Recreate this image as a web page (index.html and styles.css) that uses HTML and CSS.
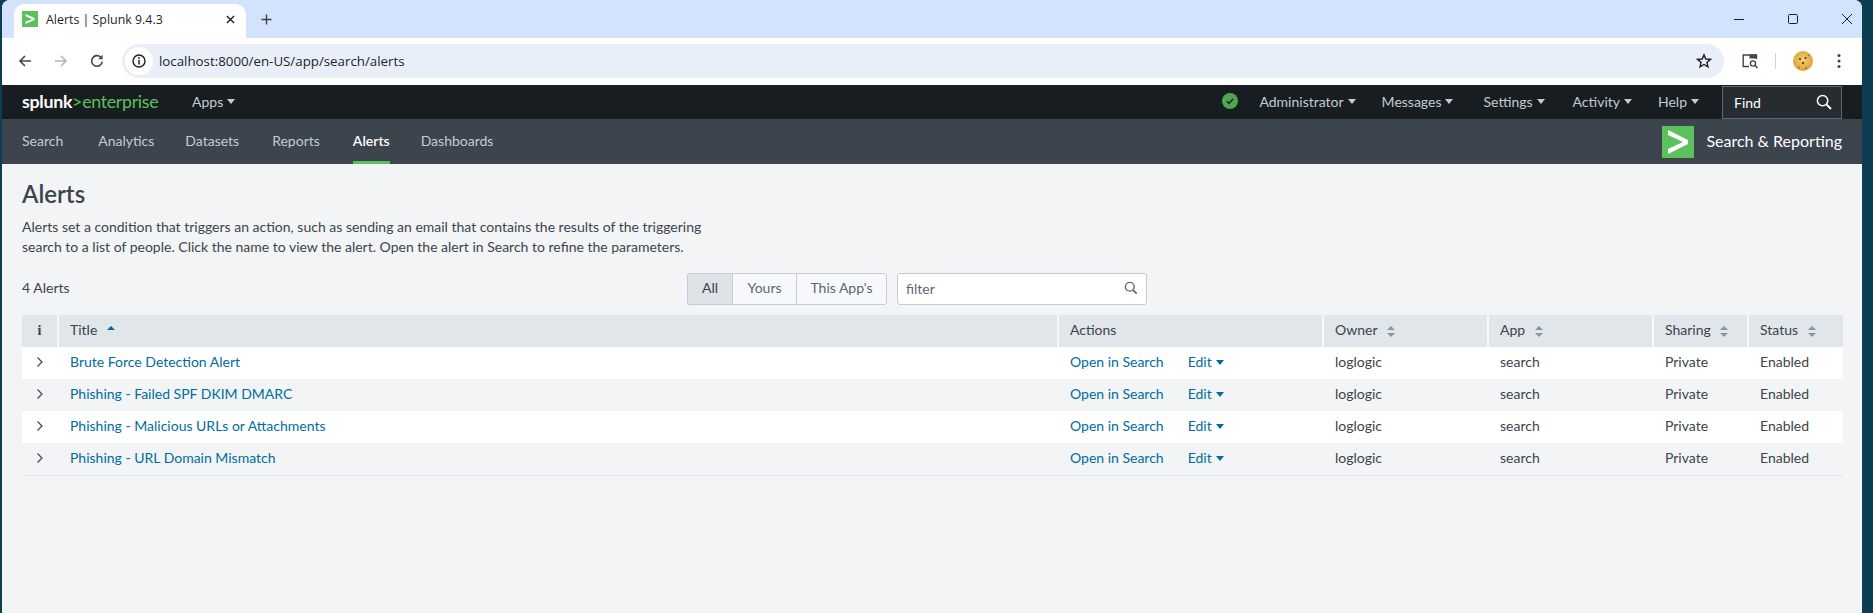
FILE: index.html
```html
<!DOCTYPE html>
<html lang="en">
<head>
<meta charset="utf-8">
<title>Alerts | Splunk 9.4.3</title>
<link rel="stylesheet" href="styles.css">
</head>
<body>
<div class="window">
  <div class="tabstrip">
    <div class="tab">
      <svg class="favicon" viewBox="0 0 16 16"><rect width="16" height="16" fill="#5cc05c"/><path d="M3.5 3 L12.5 7 V9 L3.5 13 V10.8 L10 8 L3.5 5.2Z" fill="#fff"/></svg>
      <span class="tab-title">Alerts | Splunk 9.4.3</span>
      <svg class="tab-close" viewBox="0 0 10 10"><path d="M1 1 L9 9 M9 1 L1 9" stroke="#1f1f1f" stroke-width="1.5" fill="none"/></svg>
    </div>
    <svg class="newtab" viewBox="0 0 12 12"><path d="M6 0.5 V11.5 M0.5 6 H11.5" stroke="#3c4043" stroke-width="1.5" fill="none"/></svg>
    <div class="winctrls">
      <svg class="winbtn" viewBox="0 0 12 12"><path d="M1 6.5 H11" stroke="#1f1f1f" stroke-width="1"/></svg>
      <svg class="winbtn" viewBox="0 0 12 12"><rect x="1.5" y="1.5" width="9" height="9" rx="1" fill="none" stroke="#1f1f1f" stroke-width="1"/></svg>
      <svg class="winbtn" viewBox="0 0 12 12"><path d="M1 1 L11 11 M11 1 L1 11" stroke="#1f1f1f" stroke-width="1" fill="none"/></svg>
    </div>
  </div>
  <div class="toolbar">
    <svg class="tool first" viewBox="0 0 16 16"><path d="M14 8 H3 M8 3 L3 8 L8 13" stroke="#474747" stroke-width="1.6" fill="none"/></svg>
    <svg class="tool" viewBox="0 0 16 16"><path d="M2 8 H13 M8 3 L13 8 L8 13" stroke="#b4b6b8" stroke-width="1.6" fill="none"/></svg>
    <svg class="tool" viewBox="0 0 16 16"><path d="M13.2 8.6 A5.3 5.3 0 1 1 11.7 4.2" stroke="#474747" stroke-width="1.6" fill="none"/><path d="M13.6 1.8 V6.2 H9.2Z" fill="#474747"/></svg>
    <div class="omnibox">
      <span class="info-wrap"><svg class="info" viewBox="0 0 14 14"><circle cx="7" cy="7" r="6" fill="none" stroke="#1f1f1f" stroke-width="1.4"/><path d="M7 6 V10.4" stroke="#1f1f1f" stroke-width="1.5"/><circle cx="7" cy="4" r=".9" fill="#1f1f1f"/></svg></span>
      <span class="url">localhost:8000/en-US/app/search/alerts</span>
      <svg class="star" viewBox="0 0 16 16"><path d="M8 1.8 L9.8 6 L14.4 6.4 L10.9 9.4 L12 13.9 L8 11.5 L4 13.9 L5.1 9.4 L1.6 6.4 L6.2 6Z" fill="none" stroke="#1f1f1f" stroke-width="1.4"/></svg>
    </div>
    <svg class="panel" viewBox="0 0 18 18"><path d="M8 14.5 H2.2 V3 H15.5 V7" fill="none" stroke="#444" stroke-width="1.4"/><rect x="8.5" y="2.5" width="7.5" height="4" fill="#444"/><circle cx="12" cy="11.5" r="2.6" fill="none" stroke="#444" stroke-width="1.4"/><path d="M14 13.5 L16.5 16" stroke="#444" stroke-width="1.5"/></svg>
    <span class="sep"></span>
    <svg class="avatar" viewBox="0 0 20 20"><defs><radialGradient id="av" cx=".5" cy=".45" r=".6"><stop offset="0" stop-color="#f3d46a"/><stop offset="1" stop-color="#d99b35"/></radialGradient></defs><circle cx="10" cy="10" r="10" fill="url(#av)"/><circle cx="7" cy="8" r="1.1" fill="#333"/><circle cx="12.5" cy="7" r="1" fill="#333"/><circle cx="10" cy="12" r="1.2" fill="#6b4a1c"/><circle cx="15.5" cy="4.5" r="1" fill="#d8553c"/><circle cx="6" cy="16.5" r="1" fill="#d8553c"/><circle cx="13" cy="17" r="1" fill="#d8553c"/></svg>
    <svg class="dots" viewBox="0 0 4 16"><circle cx="2" cy="2.5" r="1.5" fill="#444"/><circle cx="2" cy="8" r="1.5" fill="#444"/><circle cx="2" cy="13.5" r="1.5" fill="#444"/></svg>
  </div>

  <header class="topnav">
    <a class="brand"><b>splunk</b><span class="gt">&gt;</span><span class="ent">enterprise</span></a>
    <a class="navitem apps">Apps<i class="caret"></i></a>
    <span class="spacer"></span>
    <svg class="status-ok" viewBox="0 0 16 16"><circle cx="8" cy="8" r="8" fill="#4fa64f"/><path d="M4.8 8.3 L7 10.4 L11.2 5.8" stroke="#10261a" stroke-width="1.4" fill="none"/></svg>
    <a class="navitem admin">Administrator<i class="caret"></i></a>
    <a class="navitem messages">Messages<i class="caret"></i></a>
    <a class="navitem">Settings<i class="caret"></i></a>
    <a class="navitem activity">Activity<i class="caret"></i></a>
    <a class="navitem help">Help<i class="caret"></i></a>
    <div class="find"><span>Find</span><svg class="find-icon" viewBox="0 0 16 16"><circle cx="6.6" cy="6.6" r="5.2" fill="none" stroke="#fff" stroke-width="1.5"/><path d="M10.4 10.4 L15 15" stroke="#fff" stroke-width="2"/></svg></div>
  </header>

  <nav class="appbar">
    <a class="first">Search</a><a class="second">Analytics</a><a>Datasets</a><a>Reports</a><a class="active">Alerts</a><a>Dashboards</a>
    <span class="spacer"></span>
    <svg class="applogo" viewBox="0 0 32 32"><rect width="32" height="32" fill="#5cc05c"/><path d="M6 4 L26 14 V18 L6 28 V23 L21 16 L6 9Z" fill="#fff"/></svg>
    <span class="appname">Search &amp; Reporting</span>
  </nav>

  <main class="content">
    <h1>Alerts</h1>
    <p class="desc">Alerts set a condition that triggers an action, such as sending an email that contains the results of the triggering<br>search to a list of people. Click the name to view the alert. Open the alert in Search to refine the parameters.</p>
    <div class="controls">
      <span class="count">4 Alerts</span>
      <div class="btngroup"><button class="sel">All</button><button>Yours</button><button>This App's</button></div>
      <div class="filter"><span>filter</span><svg class="filter-icon" viewBox="0 0 16 16"><circle cx="6.6" cy="6.6" r="5" fill="none" stroke="#5c6773" stroke-width="1.6"/><path d="M10.3 10.3 L14.5 14.5" stroke="#5c6773" stroke-width="2"/></svg></div>
    </div>
    <table class="alerts">
      <colgroup><col class="c-i"><col class="c-title"><col class="c-actions"><col class="c-owner"><col class="c-app"><col class="c-sharing"><col class="c-status"></colgroup>
      <thead><tr>
        <th class="i">i</th>
        <th>Title <i class="sort-up"></i></th>
        <th>Actions</th>
        <th>Owner <i class="sort"></i></th>
        <th>App <i class="sort"></i></th>
        <th>Sharing <i class="sort"></i></th>
        <th>Status <i class="sort"></i></th>
      </tr></thead>
      <tbody>
        <tr><td class="exp"><svg class="chev" viewBox="0 0 8 12"><path d="M1.5 1.5 L6 6 L1.5 10.5" fill="none" stroke="#3c444d" stroke-width="1.2"/></svg></td><td><a>Brute Force Detection Alert</a></td><td><a class="open">Open in Search</a><a>Edit<i class="edit-caret"></i></a></td><td>loglogic</td><td>search</td><td>Private</td><td>Enabled</td></tr>
        <tr><td class="exp"><svg class="chev" viewBox="0 0 8 12"><path d="M1.5 1.5 L6 6 L1.5 10.5" fill="none" stroke="#3c444d" stroke-width="1.2"/></svg></td><td><a>Phishing - Failed SPF DKIM DMARC</a></td><td><a class="open">Open in Search</a><a>Edit<i class="edit-caret"></i></a></td><td>loglogic</td><td>search</td><td>Private</td><td>Enabled</td></tr>
        <tr><td class="exp"><svg class="chev" viewBox="0 0 8 12"><path d="M1.5 1.5 L6 6 L1.5 10.5" fill="none" stroke="#3c444d" stroke-width="1.2"/></svg></td><td><a>Phishing - Malicious URLs or Attachments</a></td><td><a class="open">Open in Search</a><a>Edit<i class="edit-caret"></i></a></td><td>loglogic</td><td>search</td><td>Private</td><td>Enabled</td></tr>
        <tr><td class="exp"><svg class="chev" viewBox="0 0 8 12"><path d="M1.5 1.5 L6 6 L1.5 10.5" fill="none" stroke="#3c444d" stroke-width="1.2"/></svg></td><td><a>Phishing - URL Domain Mismatch</a></td><td><a class="open">Open in Search</a><a>Edit<i class="edit-caret"></i></a></td><td>loglogic</td><td>search</td><td>Private</td><td>Enabled</td></tr>
      </tbody>
    </table>
  </main>
</div>
</body>
</html>
```
FILE: styles.css
```css
* { box-sizing: border-box; }
html, body { margin: 0; height: 613px; overflow: hidden; }
body { background: #0c3d52; font-family: Lato, "Open Sans", sans-serif; }
.window { width: 1860px; height: 613px; margin-left: 2px; display: flex; flex-direction: column; background: #f2f4f5; border-top-right-radius: 8px; border-top-left-radius: 8px; overflow: hidden; }
.spacer { flex: 1; }

/* browser chrome */
.tabstrip { height: 38px; flex: none; background: #d3e3fd; display: flex; align-items: center; }
.tab { width: 232px; height: 34px; margin: 4px 0 0 12px; background: #fff; border-radius: 10px 10px 0 0; display: flex; align-items: center; padding: 0 0 4px 8px; }
.favicon { width: 16px; height: 16px; flex: none; }
.tab-title { margin-left: 8px; font: 12.4px "Open Sans", sans-serif; color: #1f1f1f; flex: 1; white-space: nowrap; }
.tab-close { width: 9px; height: 9px; margin-right: 11px; flex: none; }
.newtab { width: 11px; height: 11px; margin-left: 15px; }
.winctrls { margin-left: auto; display: flex; gap: 42px; padding-right: 9px; }
.winbtn { width: 12px; height: 12px; }
.toolbar { height: 47px; flex: none; background: #fff; display: flex; align-items: center; padding-bottom: 1px; }
.tool { width: 16px; height: 16px; margin-left: 20px; flex: none; }
.tool.first { margin-left: 15px; }
.omnibox { width: 1602px; height: 34px; margin-left: 17px; background: #e9eff9; border-radius: 17px; display: flex; align-items: center; padding: 0 12px 0 3px; }
.info-wrap { width: 28px; height: 28px; border-radius: 50%; background: #fff; display: flex; align-items: center; justify-content: center; flex: none; }
.info { width: 14px; height: 14px; }
.url { margin-left: 6px; font: 13.3px "Open Sans", sans-serif; color: #1f1f1f; flex: 1; }
.star { width: 16px; height: 16px; flex: none; }
.panel { width: 18px; height: 18px; margin-left: 17px; flex: none; }
.sep { width: 1px; height: 16px; background: #c7d7f0; margin-left: 16px; flex: none; }
.avatar { width: 20px; height: 20px; margin-left: 17px; flex: none; }
.dots { width: 4px; height: 16px; margin-left: 24px; flex: none; }

/* top nav */
.topnav { height: 34px; flex: none; background: #171d21; display: flex; align-items: center; padding: 0 20px 2px; color: #c3cbd4; font-size: 14px; }
.brand { font-size: 17.8px; letter-spacing: -.3px; white-space: nowrap; width: 170px; }
.brand b { color: #fff; font-weight: 700; }
.gt, .ent { color: #5cc05c; }
.navitem { display: inline-flex; align-items: center; margin-right: 28px; white-space: nowrap; }
.apps { margin: 0; }
.admin { margin-left: 21px; margin-right: 26px; }
.messages { margin-right: 30px; }
.activity { margin-right: 26px; }
.help { margin-right: 23px; }
.caret { width: 0; height: 0; margin-left: 4px; border: 4px solid transparent; border-top: 5px solid #c3cbd4; border-bottom: 0; display: inline-block; }
.status-ok { width: 16px; height: 16px; flex: none; }
.find { width: 120px; height: 33px; margin-top: 2px; background: #272c31; border: 1px solid #5c6773; color: #fff; display: flex; align-items: center; justify-content: space-between; padding: 0 9px 0 11px; }
.find-icon { width: 16px; height: 16px; }

/* app bar */
.appbar { height: 45px; flex: none; background: #3c444d; display: flex; align-items: center; padding: 0 20px; gap: 33px; color: #c3cbd4; font-size: 14px; }
.appbar a { height: 45px; line-height: 44px; }
.appbar .first { margin-right: 2px; }
.appbar .second { margin-right: -2px; }
.appbar .active { color: #fff; font-weight: 600; border-bottom: 3px solid #5cc05c; margin-right: -2px; }
.applogo { width: 32px; height: 32px; flex: none; }
.appname { color: #fff; font-size: 16px; margin-left: -21px; padding-bottom: 2px; }

/* page */
.content { flex: 1; padding: 0 20px; color: #3c444d; font-size: 14px; }
h1 { margin: 17px 0 0; font-size: 24px; line-height: 26px; font-weight: 600; color: #3c444d; }
.desc { margin: 10px 0 0; line-height: 20px; font-size: 14px; color: #3c444d; }
.controls { margin-top: 16px; height: 32px; display: flex; align-items: center; }
.count { width: 665px; padding-bottom: 4px; }
.btngroup { display: grid; grid-template-columns: 44px 64px 1fr; height: 32px; border: 1px solid #c3cbd4; border-radius: 3px; overflow: hidden; width: 200px; }
.btngroup button { font: inherit; border: 0; border-left: 1px solid #c3cbd4; background: #f7f8fa; color: #5c6773; padding: 0 0 3px; white-space: nowrap; }
.btngroup .sel { border-left: 0; background: #dfe3e8; color: #3c444d; }
.filter { width: 250px; height: 32px; margin-left: 10px; background: #fff; border: 1px solid #c3cbd4; border-radius: 3px; display: flex; align-items: center; justify-content: space-between; padding: 0 8px 2px; color: #5c6773; }
.filter-icon { width: 14px; height: 14px; }
.alerts { margin-top: 10px; width: 1821px; table-layout: fixed; border-collapse: separate; border-spacing: 0; border-bottom: 1px solid #e1e6eb; }
.c-i { width: 35px; } .c-title { width: 1000px; } .c-actions { width: 265px; } .c-owner { width: 165px; } .c-app { width: 165px; } .c-sharing { width: 95px; } .c-status { width: 96px; }
th { height: 32px; background: #e1e6eb; font-weight: 400; text-align: left; padding: 0 0 3px 11px; border-left: 2px solid #f7f8fa; color: #3c444d; white-space: nowrap; }
th:first-child { border-left: 0; }
th.i { padding: 0 0 1px; text-align: center; font-family: "Liberation Serif", serif; font-weight: 700; }
td { height: 32px; padding: 0 0 4px 13px; white-space: nowrap; }
tbody tr:nth-child(odd) td { background: #fff; }
tbody tr:nth-child(even) td { background: #f2f4f5; }
td.exp { padding: 0 0 2px 14px; }
.chev { width: 8px; height: 12px; display: block; }
td a { color: #006d9c; }
.open { margin-right: 24px; }
.sort, .sort-up { display: inline-block; vertical-align: middle; margin-left: 6px; position: relative; width: 8px; height: 11px; }
.sort::before, .sort-up::before { content: ""; position: absolute; left: 0; top: 0; border: 4px solid transparent; border-top: 0; border-bottom: 4px solid #8a94a0; }
.sort::after { content: ""; position: absolute; left: 0; bottom: 0; border: 4px solid transparent; border-bottom: 0; border-top: 4px solid #8a94a0; }
.sort-up::before { border-bottom-color: #006d9c; }
.edit-caret { display: inline-block; width: 0; height: 0; margin-left: 4px; vertical-align: 2px; border: 4px solid transparent; border-top: 5px solid #006d9c; border-bottom: 0; }
```
